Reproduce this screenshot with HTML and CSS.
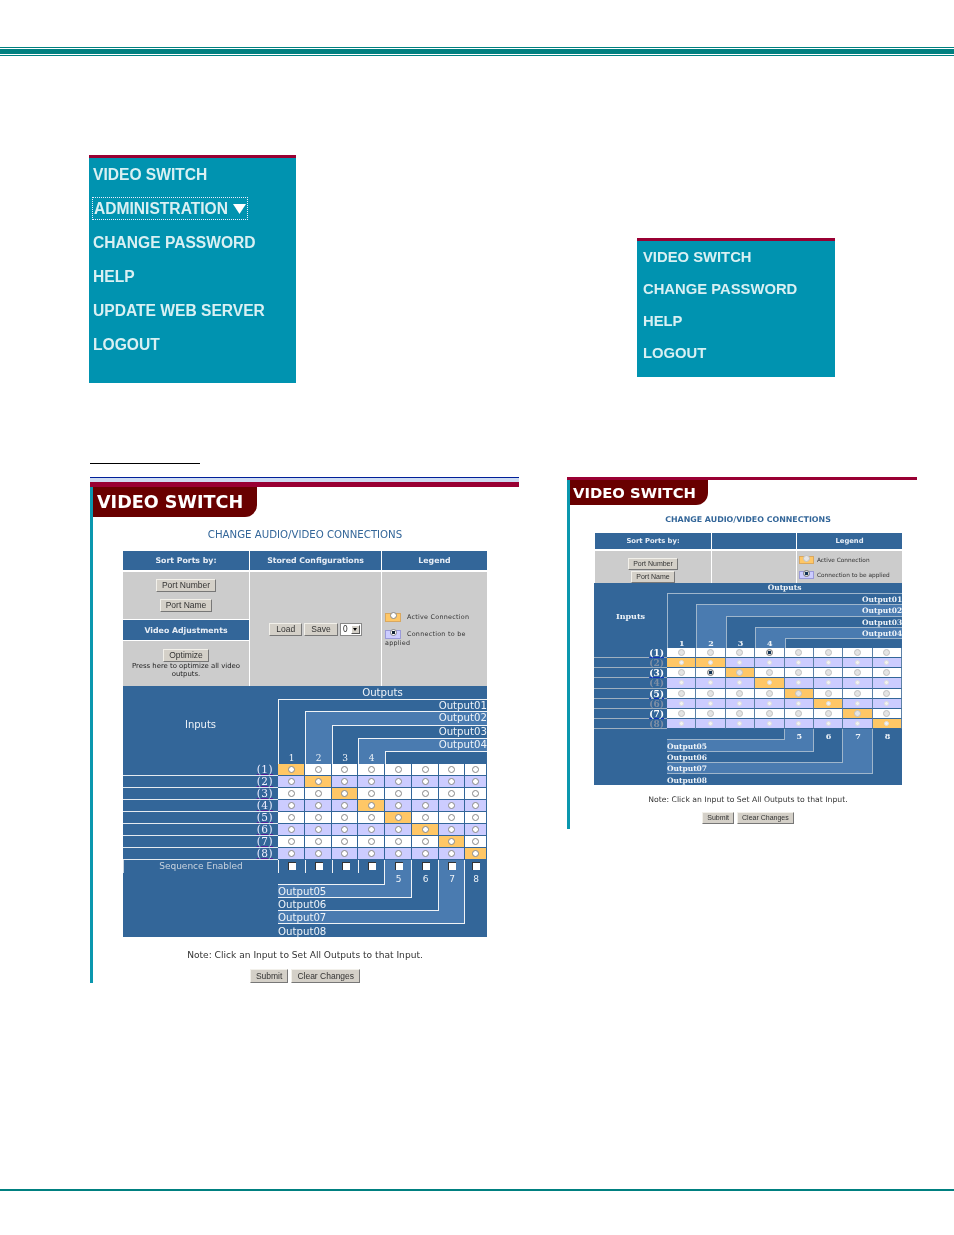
FILE: index.html
```html
<!DOCTYPE html>
<html lang="en">
<head>
<meta charset="utf-8">
<title>Video Switch</title>
<link rel="stylesheet" href="styles.css">
</head>
<body>
<header class="top-rule"><div class="thin"></div><div class="thick"></div><div class="thin"></div></header>

<div class="menus">
  <nav class="menu menu-a">
    <div class="item">VIDEO SWITCH</div>
    <div class="item"><span class="focus">ADMINISTRATION <svg class="tri" width="13" height="10" viewBox="0 0 13 10"><path d="M0 0H13L6.500 10Z" fill="#fff"/></svg></span></div>
    <div class="item">CHANGE PASSWORD</div>
    <div class="item">HELP</div>
    <div class="item">UPDATE WEB SERVER</div>
    <div class="item">LOGOUT</div>
  </nav>
  <nav class="menu menu-b">
    <div class="item">VIDEO SWITCH</div>
    <div class="item">CHANGE PASSWORD</div>
    <div class="item">HELP</div>
    <div class="item">LOGOUT</div>
  </nav>
</div>

<div class="underline"></div>

<div class="shots">
  <section class="shot shot-l">
    <div class="band"></div>
    <div class="body">
      <h1 class="tab">VIDEO SWITCH</h1>
      <div class="content">
        <h2 class="title">CHANGE AUDIO/VIDEO CONNECTIONS</h2>
        <div class="ctl">
          <div class="th">Sort Ports by:</div>
          <div class="th">Stored Configurations</div>
          <div class="th">Legend</div>
          <div class="td sort">
            <button class="btn">Port Number</button>
            <button class="btn btn-name">Port Name</button>
            <div class="th sub">Video Adjustments</div>
            <button class="btn btn-opt">Optimize</button>
            <p class="hint">Press here to optimize all video outputs.</p>
          </div>
          <div class="td stored">
            <button class="btn">Load</button>
            <button class="btn">Save</button>
            <span class="sel"><span class="val">0</span><span class="arrow"></span></span>
          </div>
          <div class="td legend">
            <div class="leg"><span class="sw sw-a"><i class="r"></i></span>Active Connection</div>
            <div class="leg"><span class="sw sw-b"><i class="r s"></i></span>Connection to be<br>applied</div>
          </div>
        </div>
        <div class="mx">
          <div class="m-out">Outputs</div>
          <div class="m-in">Inputs</div>
          <div class="o o1">Output01</div>
          <div class="o o2">Output02</div>
          <div class="o o3">Output03</div>
          <div class="o o4">Output04</div>
          <div class="o o0"></div>
          <div class="n n1">1</div><div class="n n2">2</div><div class="n n3">3</div><div class="n n4">4</div>

          <div class="row"><a class="l">(1)</a><span class="c a"><i class="r"></i></span><span class="c"><i class="r"></i></span><span class="c"><i class="r"></i></span><span class="c"><i class="r"></i></span><span class="c"><i class="r"></i></span><span class="c"><i class="r"></i></span><span class="c"><i class="r"></i></span><span class="c"><i class="r"></i></span></div>
          <div class="row even"><a class="l">(2)</a><span class="c"><i class="r"></i></span><span class="c a"><i class="r"></i></span><span class="c"><i class="r"></i></span><span class="c"><i class="r"></i></span><span class="c"><i class="r"></i></span><span class="c"><i class="r"></i></span><span class="c"><i class="r"></i></span><span class="c"><i class="r"></i></span></div>
          <div class="row"><a class="l">(3)</a><span class="c"><i class="r"></i></span><span class="c"><i class="r"></i></span><span class="c a"><i class="r"></i></span><span class="c"><i class="r"></i></span><span class="c"><i class="r"></i></span><span class="c"><i class="r"></i></span><span class="c"><i class="r"></i></span><span class="c"><i class="r"></i></span></div>
          <div class="row even"><a class="l">(4)</a><span class="c"><i class="r"></i></span><span class="c"><i class="r"></i></span><span class="c"><i class="r"></i></span><span class="c a"><i class="r"></i></span><span class="c"><i class="r"></i></span><span class="c"><i class="r"></i></span><span class="c"><i class="r"></i></span><span class="c"><i class="r"></i></span></div>
          <div class="row"><a class="l">(5)</a><span class="c"><i class="r"></i></span><span class="c"><i class="r"></i></span><span class="c"><i class="r"></i></span><span class="c"><i class="r"></i></span><span class="c a"><i class="r"></i></span><span class="c"><i class="r"></i></span><span class="c"><i class="r"></i></span><span class="c"><i class="r"></i></span></div>
          <div class="row even"><a class="l">(6)</a><span class="c"><i class="r"></i></span><span class="c"><i class="r"></i></span><span class="c"><i class="r"></i></span><span class="c"><i class="r"></i></span><span class="c"><i class="r"></i></span><span class="c a"><i class="r"></i></span><span class="c"><i class="r"></i></span><span class="c"><i class="r"></i></span></div>
          <div class="row"><a class="l">(7)</a><span class="c"><i class="r"></i></span><span class="c"><i class="r"></i></span><span class="c"><i class="r"></i></span><span class="c"><i class="r"></i></span><span class="c"><i class="r"></i></span><span class="c"><i class="r"></i></span><span class="c a"><i class="r"></i></span><span class="c"><i class="r"></i></span></div>
          <div class="row even"><a class="l">(8)</a><span class="c"><i class="r"></i></span><span class="c"><i class="r"></i></span><span class="c"><i class="r"></i></span><span class="c"><i class="r"></i></span><span class="c"><i class="r"></i></span><span class="c"><i class="r"></i></span><span class="c"><i class="r"></i></span><span class="c a"><i class="r"></i></span></div>

          <div class="b b8">Output08</div>
          <div class="b b7">Output07</div>
          <div class="b b6">Output06</div>
          <div class="b b5">Output05</div>
          <div class="b b0"></div>
          <div class="seq">Sequence Enabled</div>
          <span class="ck k1"><i></i></span><span class="ck k2"><i></i></span><span class="ck k3"><i></i></span><span class="ck k4"><i></i></span><span class="ck k5"><i></i></span><span class="ck k6"><i></i></span><span class="ck k7"><i></i></span><span class="ck k8"><i></i></span>
          <div class="n n5">5</div><div class="n n6">6</div><div class="n n7">7</div><div class="n n8">8</div>
        </div>
        <p class="note">Note: Click an Input to Set All Outputs to that Input.</p>
        <div class="actions"><button class="btn">Submit</button><button class="btn">Clear Changes</button></div>
      </div>
    </div>
  </section>

  <section class="shot shot-s">
    <div class="band"></div>
    <div class="body">
      <h1 class="tab">VIDEO SWITCH</h1>
      <div class="content">
        <h2 class="title">CHANGE AUDIO/VIDEO CONNECTIONS</h2>
        <div class="ctl">
          <div class="th">Sort Ports by:</div>
          <div class="th"></div>
          <div class="th">Legend</div>
          <div class="td sort">
            <button class="btn">Port Number</button>
            <button class="btn btn-name">Port Name</button>
          </div>
          <div class="td stored"></div>
          <div class="td legend">
            <div class="leg"><span class="sw sw-a"><i class="r"></i></span>Active Connection</div>
            <div class="leg"><span class="sw sw-b"><i class="r s"></i></span>Connection to be applied</div>
          </div>
        </div>
        <div class="mx">
          <div class="m-out">Outputs</div>
          <div class="m-in">Inputs</div>
          <div class="o o1">Output01</div>
          <div class="o o2">Output02</div>
          <div class="o o3">Output03</div>
          <div class="o o4">Output04</div>
          <div class="o o0"></div>
          <div class="n n1">1</div><div class="n n2">2</div><div class="n n3">3</div><div class="n n4">4</div>

          <div class="row"><a class="l">(1)</a><span class="c"><i class="r"></i></span><span class="c"><i class="r"></i></span><span class="c"><i class="r"></i></span><span class="c"><i class="r s"></i></span><span class="c"><i class="r"></i></span><span class="c"><i class="r"></i></span><span class="c"><i class="r"></i></span><span class="c"><i class="r"></i></span></div>
          <div class="row even"><a class="l">(2)</a><span class="c a"><i class="r"></i></span><span class="c a"><i class="r"></i></span><span class="c"><i class="r"></i></span><span class="c"><i class="r"></i></span><span class="c"><i class="r"></i></span><span class="c"><i class="r"></i></span><span class="c"><i class="r"></i></span><span class="c"><i class="r"></i></span></div>
          <div class="row"><a class="l">(3)</a><span class="c"><i class="r"></i></span><span class="c"><i class="r s"></i></span><span class="c a"><i class="r"></i></span><span class="c"><i class="r"></i></span><span class="c"><i class="r"></i></span><span class="c"><i class="r"></i></span><span class="c"><i class="r"></i></span><span class="c"><i class="r"></i></span></div>
          <div class="row even"><a class="l">(4)</a><span class="c"><i class="r"></i></span><span class="c"><i class="r"></i></span><span class="c"><i class="r"></i></span><span class="c a"><i class="r"></i></span><span class="c"><i class="r"></i></span><span class="c"><i class="r"></i></span><span class="c"><i class="r"></i></span><span class="c"><i class="r"></i></span></div>
          <div class="row"><a class="l">(5)</a><span class="c"><i class="r"></i></span><span class="c"><i class="r"></i></span><span class="c"><i class="r"></i></span><span class="c"><i class="r"></i></span><span class="c a"><i class="r"></i></span><span class="c"><i class="r"></i></span><span class="c"><i class="r"></i></span><span class="c"><i class="r"></i></span></div>
          <div class="row even"><a class="l">(6)</a><span class="c"><i class="r"></i></span><span class="c"><i class="r"></i></span><span class="c"><i class="r"></i></span><span class="c"><i class="r"></i></span><span class="c"><i class="r"></i></span><span class="c a"><i class="r"></i></span><span class="c"><i class="r"></i></span><span class="c"><i class="r"></i></span></div>
          <div class="row"><a class="l">(7)</a><span class="c"><i class="r"></i></span><span class="c"><i class="r"></i></span><span class="c"><i class="r"></i></span><span class="c"><i class="r"></i></span><span class="c"><i class="r"></i></span><span class="c"><i class="r"></i></span><span class="c a"><i class="r"></i></span><span class="c"><i class="r"></i></span></div>
          <div class="row even"><a class="l">(8)</a><span class="c"><i class="r"></i></span><span class="c"><i class="r"></i></span><span class="c"><i class="r"></i></span><span class="c"><i class="r"></i></span><span class="c"><i class="r"></i></span><span class="c"><i class="r"></i></span><span class="c"><i class="r"></i></span><span class="c a"><i class="r"></i></span></div>

          <div class="b b8">Output08</div>
          <div class="b b7">Output07</div>
          <div class="b b6">Output06</div>
          <div class="b b5">Output05</div>
          <div class="b b0"></div>
          <div class="n n5">5</div><div class="n n6">6</div><div class="n n7">7</div><div class="n n8">8</div>
        </div>
        <p class="note">Note: Click an Input to Set All Outputs to that Input.</p>
        <div class="actions"><button class="btn">Submit</button><button class="btn">Clear Changes</button></div>
      </div>
    </div>
  </section>
</div>

<footer class="bottom-rule"></footer>
</body>
</html>
```
FILE: styles.css
```css
* { box-sizing: border-box; }
html, body { margin: 0; padding: 0; background: #fff; }
body { width: 954px; height: 1235px; overflow: hidden; font-family: "DejaVu Sans", sans-serif; }

/* page rules */
.top-rule { padding-top: 47px; }
.top-rule .thin { height: 1px; background: #008080; }
.top-rule .thick { height: 5px; margin: 1px 0; background: #008080; }
.bottom-rule { height: 2px; margin-top: 206px; background: #008080; }

/* navigation menus */
.menus { display: flex; align-items: flex-start; padding-left: 89px; }
.menu { background: #0093b0; border-top: 3px solid #990033; color: #d9f0f3; font-family: "Liberation Sans", sans-serif; font-weight: 700; filter: blur(.35px); }
.menu-a { width: 207px; height: 228px; margin-top: 99px; padding: 0 0 0 4px; font-size: 15.600px; }
.menu-a .item { height: 34px; line-height: 34px; }
.menu-b { width: 198px; height: 139px; margin: 182px 0 0 341px; padding: 0 0 0 6px; font-size: 14.800px; }
.menu-b .item { height: 32px; line-height: 32px; }
.focus { display: inline-flex; align-items: center; justify-content: space-between; height: 23px; width: 156px; margin-left: -1px; padding: 0 1px; border: 1px dotted #eef; line-height: 21px; }
.tri { flex: none; }

.underline { width: 110px; height: 1px; margin: 80px 0 0 90px; background: #000; }

/* screenshots */
.shots { display: flex; align-items: flex-start; padding: 13px 0 0 90px; }
.shot { filter: blur(.35px); }
.shot-l { width: 429px; }
.shot-s { width: 350px; margin-left: 48px; }
.band { background: #990033; }
.shot-l .band { height: 10px; border-top: 1px solid #001f99; background: linear-gradient(#cfdcf2 0 4px, #990033 4px); }
.shot-s .band { height: 3px; }
.body { border-left: 3px solid #0a97ae; }
.shot-l .body { height: 496px; }
.shot-s .body { height: 349px; }
.tab { width: max-content; margin: 0; background: #690000; color: #fff; font-weight: 700; border-bottom-right-radius: 12px; }
.shot-l .tab { height: 30px; padding: 0 14px 0 4px; font-size: 17.600px; line-height: 30px; }
.shot-s .tab { height: 25px; padding: 0 12px 0 3px; font-size: 14.800px; line-height: 25px; }

.content { text-align: center; color: #333; }
.shot-l .content { width: 364px; margin-left: 30px; }
.shot-s .content { width: 308px; margin-left: 24px; }
.title { margin: 0; color: #336699; }
.shot-l .title { margin: 12px 0 10px; font-size: 10.200px; font-weight: 400; line-height: 12px; }
.shot-s .title { margin: 10px 0 8px; font-size: 7.900px; font-weight: 700; line-height: 10px; }

/* controls table */
.ctl { display: grid; gap: 1px; background: #fff; }
.shot-l .ctl { grid-template-columns: 126px 131px 105px; grid-template-rows: 19px 114px; row-gap: 2px; }
.shot-s .ctl { grid-template-columns: 116px 84px 105px; grid-template-rows: 16px 32px; row-gap: 2px; margin-left: 1px; }
.th { display: flex; align-items: center; justify-content: center; background: #336699; color: #e8eef6; font-weight: 700; }
.shot-l .th { font-size: 7.800px; }
.shot-s .th { font-size: 6.800px; }
.td { background: #ccc; }
.sort { display: flex; flex-direction: column; align-items: center; }
.shot-l .sort { padding-top: 7px; }
.shot-s .sort { padding-top: 7px; }
.sub { align-self: stretch; flex: none; height: 20px; margin-top: 8px; box-shadow: 0 1px #fff, 0 -1px #fff; }
.btn-opt { margin-top: 9px; }
.hint { margin: 0; font-size: 6.900px; line-height: 8px; width: 122px; color: #222; }
.shot-l .btn-name { margin-top: 7px; }
.shot-s .btn-name { margin-top: 1px; }
.stored { display: flex; align-items: center; justify-content: center; gap: 2px; }

.btn { display: block; background: #d4d0c8; border: 1px solid; border-color: #f2f0ea #777 #777 #f2f0ea; color: #333; font-family: "Liberation Sans", sans-serif; }
.shot-l .btn { height: 13px; padding: 0 5px; font-size: 8.500px; line-height: 11px; }
.shot-s .btn { height: 12px; padding: 0 4px; font-size: 7px; line-height: 10px; }
.shot-l .stored .btn { display: inline-block; padding: 0 6px; }
.shot-l .actions .btn { height: 14px; line-height: 12px; }
.sel { display: inline-flex; align-items: center; justify-content: space-between; width: 22px; height: 13px; padding: 1px; background: #fff; border: 1px solid #888; font-size: 8px; color: #333; }
.val { padding-left: 1px; }
.arrow { width: 9px; height: 9px; background: #d4d0c8; position: relative; border: 1px solid; border-color: #fff #555 #555 #fff; }
.arrow::after { content: ""; position: absolute; left: 1px; top: 2px; border: 2.500px solid transparent; border-top: 3px solid #000; border-bottom: 0; }

.legend { text-align: left; display: flex; flex-direction: column; color: #333; }
.shot-l .legend { justify-content: center; padding: 3px 0 0 3px; gap: 8px; font-size: 6.400px; line-height: 9px; letter-spacing: .25px; }
.shot-s .legend { padding: 5px 0 0 2px; gap: 6px; font-size: 5.800px; line-height: 9px; }
.sw { display: inline-flex; justify-content: center; vertical-align: top; border: 1px solid #9a9ad8; }
.shot-l .sw { width: 16px; height: 9px; margin-right: 6px; }
.shot-s .sw { width: 15px; height: 8px; margin-right: 3px; }
.sw-a { background: #ffc766; border-color: #d9a860; }
.sw-b { background: #ccccff; }
.sw .r { margin-top: -2px; }

/* radio dots */
.r { display: block; width: 7px; height: 7px; border-radius: 50%; background: #fff; border: 1px solid #888; }
.r.s { background: radial-gradient(circle, #123 0 1.500px, #fff 2px); }
.shot-s .r { background: #e4e4e4; border-color: #c0c0c0; }
.shot-s .r.s { background: radial-gradient(circle, #135 0 1.500px, #ddd 2px); border-color: #777; }

/* connection matrix */
.mx { display: grid; background: #336699; color: #eef3f8; --line: #f0f3f6; --lite: #4a7bb0; }
.shot-l .mx {
  grid-template-columns: 155px 27px 27px 26px 27px 27px 27px 26px 22px;
  grid-template-rows: 13px 12px 14px 13px 13px 13px repeat(8, 12px) 13px 12px 13px 13px 13px 13px;
  font-size: 10.200px;
}
.shot-s .mx {
  grid-template-columns: 73px repeat(8, 29.400px);
  grid-template-rows: 10px 11px 11.500px 11px 11px 10.500px repeat(8, 10.150px) 0 11px 12px 11px 11px 11px;
  font-family: "DejaVu Serif", serif; font-weight: 700; font-size: 7.500px;
  --line: #9fb6cc;
}
.m-out { grid-area: 1 / 1 / 2 / 10; text-align: center; }
.shot-l .m-out { padding-left: 155px; line-height: 13px; }
.shot-s .m-out { padding-left: 73px; line-height: 10px; }
.m-in { grid-area: 2 / 1 / 7 / 2; text-align: center; }
.shot-l .m-in { padding-top: 20px; font-size: 10px; }
.shot-s .m-in { padding-top: 18px; font-size: 8px; }

.o { text-align: right; border-top: 1px solid var(--line); border-left: 1px solid var(--line); }
.shot-l .o { line-height: 11px; }
.shot-s .o { line-height: 11px; }
.o1 { grid-area: 2 / 2 / 7 / 10; }
.o2 { grid-area: 3 / 3 / 7 / 10; background: var(--lite); }
.o3 { grid-area: 4 / 4 / 7 / 10; background: #336699; }
.o4 { grid-area: 5 / 5 / 7 / 10; background: var(--lite); }
.o0 { grid-area: 6 / 6 / 7 / 10; background: #336699; }

.n { z-index: 1; text-align: center; font-family: "DejaVu Serif", serif; }
.shot-l .n { font-size: 9px; line-height: 14px; }
.shot-s .n { font-size: 8px; font-weight: 700; line-height: 10px; }
.n1 { grid-area: 6 / 2; } .n2 { grid-area: 6 / 3; } .n3 { grid-area: 6 / 4; } .n4 { grid-area: 6 / 5; }
.n5 { grid-area: 16 / 6; } .n6 { grid-area: 16 / 7; } .n7 { grid-area: 16 / 8; } .n8 { grid-area: 16 / 9; }
.shot-l .n5, .shot-l .n6, .shot-l .n7, .shot-l .n8 { font-family: "DejaVu Sans", sans-serif; line-height: 13px; }
.shot-s .n5, .shot-s .n6, .shot-s .n7, .shot-s .n8 { line-height: 14px; }

.row { display: contents; }
.l { text-align: right; font-family: "DejaVu Serif", serif; text-decoration: underline; text-decoration-thickness: 1px; border-bottom: 1px solid #e4eaf0; }
.shot-l .l { padding-right: 5px; font-size: 10.500px; letter-spacing: .5px; line-height: 11px; text-decoration-color: #552299; color: #eef; }
.shot-s .l { padding-right: 3px; font-size: 9px; line-height: 10px; color: #fff; text-decoration-color: #1133bb; border-bottom-color: #9fb0c0; }
.shot-s .even .l { color: #7f8fa5; text-decoration: none; }
.c { display: flex; align-items: center; justify-content: center; background: #fff; border-right: 1px solid #336699; border-bottom: 1px solid #336699; }
.even .c { background: #ccccff; }
.c.a, .even .c.a { background: #ffc766; }
.shot-s .c { border-right-color: #5d82a8; }
.shot-s .even .r { width: 5px; height: 5px; background: #f2f2f2; border-color: #ddd; }

.b { display: flex; align-items: flex-end; border-right: 1px solid var(--line); border-bottom: 1px solid var(--line); }
.shot-l .b { line-height: 10px; }
.shot-l .b8 { line-height: 11px; }
.shot-s .b { line-height: 8px; }
.b8 { grid-area: 15 / 2 / 21 / 10; background: #336699; border: 0; }
.b7 { grid-area: 15 / 2 / 20 / 9; background: var(--lite); }
.b6 { grid-area: 15 / 2 / 19 / 8; background: #336699; }
.b5 { grid-area: 15 / 2 / 18 / 7; background: var(--lite); }
.b0 { grid-area: 15 / 2 / 17 / 6; background: #336699; }
.seq { grid-area: 15 / 1 / 16 / 2; z-index: 1; color: #c9d3de; font-size: 9px; line-height: 13px; text-align: center; border-left: 1px solid #c6d2de; }
.ck { z-index: 1; display: flex; justify-content: center; padding-top: 2px; }
.ck i { display: block; width: 8px; height: 8px; background: #fff; border-top: 1px solid #333; border-left: 1px solid #333; }
.k1, .k2, .k3, .k4 { border-left: 1px solid var(--line); }
.k1 { grid-area: 15 / 2; } .k2 { grid-area: 15 / 3; } .k3 { grid-area: 15 / 4; } .k4 { grid-area: 15 / 5; }
.k5 { grid-area: 15 / 6; } .k6 { grid-area: 15 / 7; } .k7 { grid-area: 15 / 8; } .k8 { grid-area: 15 / 9; }

.note { margin: 0; color: #333; }
.shot-l .note { margin: 12px 0 8px; font-size: 9.100px; line-height: 12px; }
.shot-s .note { margin: 10px 0 7px; font-size: 7.700px; line-height: 10px; }
.actions { display: flex; justify-content: center; gap: 3px; }
```
